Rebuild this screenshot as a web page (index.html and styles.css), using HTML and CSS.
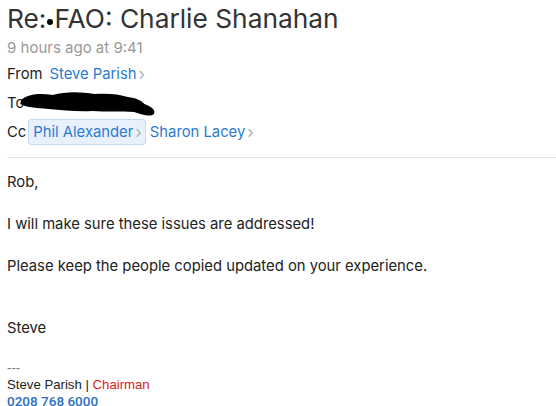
FILE: index.html
```html
<!DOCTYPE html>
<html>
<head>
<meta charset="utf-8">
<link rel="stylesheet" href="styles.css">
</head>
<body>
<div class="mail">
  <header class="head">
    <h1 class="subject">Re:<span class="dot"></span>FAO: Charlie Shanahan</h1>
    <div class="time">9 hours ago at 9:41</div>
    <div class="row"><span class="label">From</span><span class="addr">Steve Parish<span class="chev">&#x203A;</span></span></div>
    <div class="row to"><span class="label">To</span>
      <svg class="blob" width="140" height="28" viewBox="0 0 134 28" preserveAspectRatio="none"><path d="M4 10 C10 4 22 3 34 5 C48 1 62 2 74 4 C86 3 98 4 106 7 C114 8 118 10 122 14 C130 17 133 21 131 24 C128 27 120 25 112 22 C100 21 86 22 72 21 C58 22 44 20 30 19 C18 18 8 17 3 14 Z" fill="#000"/></svg>
    </div>
    <div class="row"><span class="label">Cc</span><span class="addr pill">Phil Alexander<span class="chev">&#x203A;</span></span><span class="addr">Sharon Lacey<span class="chev">&#x203A;</span></span></div>
  </header>
  <div class="body">
    <p>Rob,</p>
    <p>I will make sure these issues are addressed!</p>
    <p>Please keep the people copied updated on your experience.</p>
    <p class="sign">Steve</p>
    <div class="sig">
      <div class="dash">---</div>
      <div>Steve Parish | <span class="red">Chairman</span></div>
      <div class="phone">0208 768 6000</div>
    </div>
  </div>
</div>
</body>
</html>
```
FILE: styles.css
```css
html, body { margin: 0; padding: 0; background: #fff; }
body { font-family: Inter, "Noto Sans", sans-serif; color: #222; }
.mail { padding: 0 0 0 7px; }
.head { border-bottom: 1px solid #e3e3e3; padding-bottom: 11px; }
.subject { margin: 0; font-weight: 400; font-size: 26.3px; line-height: 37px; color: #333; letter-spacing: 0; }
.dot { display: inline-block; width: 6px; height: 6px; border-radius: 50%; background: #000; vertical-align: middle; margin: 0 1px; position: relative; top: 1px; }
.time { font-size: 15px; color: #999; line-height: 22px; margin-top: 0; }
.row { display: flex; align-items: center; font-size: 14.8px; line-height: 24px; height: 29px; }
.label { color: #222; margin-right: 6px; }
.to .label { margin-right: 0; }
.blob { margin-left: -7px; margin-top: 3px; }
.addr { color: #2a7ad2; display: inline-flex; align-items: center; padding: 0 3px 0 1px; }
.pill { background: #e8f1fb; border: 1px solid #c6d9ef; border-radius: 3px; padding: 0 3px 0 4px; margin-left: -4px; margin-right: 3px; }
.chev { color: #b0b0b0; font-size: 17px; margin-left: 2px; line-height: 20px; }
.body { padding-top: 14px; font-size: 14.8px; color: #222; }
.body p { margin: 0 0 21px; line-height: 21px; }
.body p.sign { margin-top: 41px; margin-bottom: 20px; }
.sig { font-family: "Liberation Sans", Arial, sans-serif; font-size: 13.2px; line-height: 17px; }
.dash { color: #777; }
.red { color: #e02020; }
.phone { color: #2a6fc0; font-weight: 500; font-family: Roboto, sans-serif; font-size: 13.5px; }
```
